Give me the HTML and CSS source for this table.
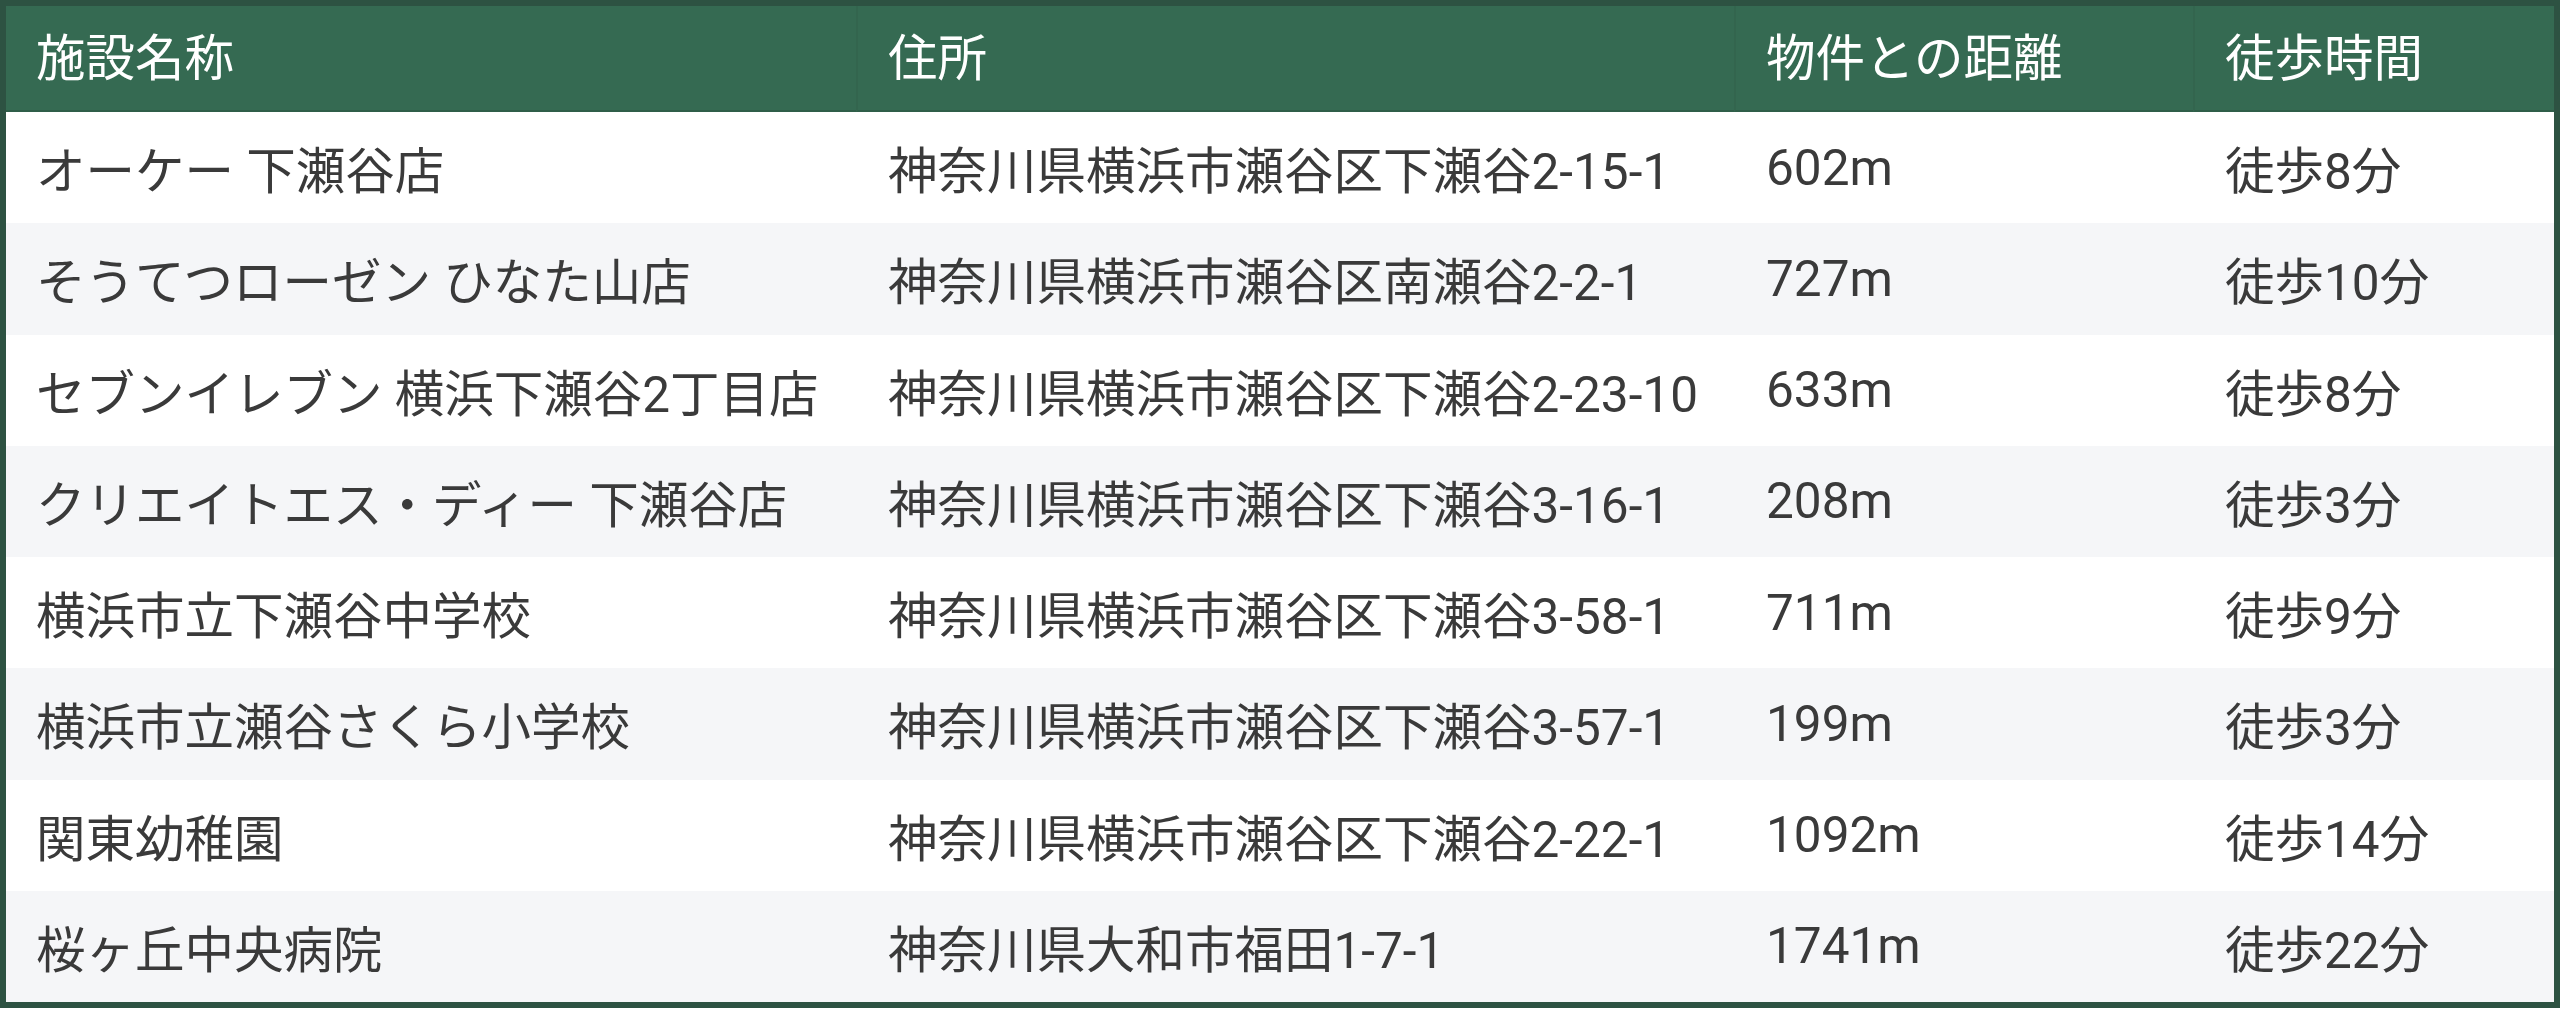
FILE: index.html
```html
<!DOCTYPE html>
<html lang="ja">
<head>
<meta charset="utf-8">
<title>周辺施設</title>
<link rel="stylesheet" href="styles.css">
</head>
<body>
<table class="facilities">
  <colgroup>
    <col class="c-name">
    <col class="c-addr">
    <col class="c-dist">
    <col class="c-walk">
  </colgroup>
  <thead>
    <tr>
      <th>施設名称</th>
      <th>住所</th>
      <th>物件との距離</th>
      <th>徒歩時間</th>
    </tr>
  </thead>
  <tbody>
    <tr><td>オーケー 下瀬谷店</td><td>神奈川県横浜市瀬谷区下瀬谷2-15-1</td><td>602m</td><td>徒歩8分</td></tr>
    <tr><td>そうてつローゼン ひなた山店</td><td>神奈川県横浜市瀬谷区南瀬谷2-2-1</td><td>727m</td><td>徒歩10分</td></tr>
    <tr><td>セブンイレブン 横浜下瀬谷2丁目店</td><td>神奈川県横浜市瀬谷区下瀬谷2-23-10</td><td>633m</td><td>徒歩8分</td></tr>
    <tr><td>クリエイトエス・ディー 下瀬谷店</td><td>神奈川県横浜市瀬谷区下瀬谷3-16-1</td><td>208m</td><td>徒歩3分</td></tr>
    <tr><td>横浜市立下瀬谷中学校</td><td>神奈川県横浜市瀬谷区下瀬谷3-58-1</td><td>711m</td><td>徒歩9分</td></tr>
    <tr><td>横浜市立瀬谷さくら小学校</td><td>神奈川県横浜市瀬谷区下瀬谷3-57-1</td><td>199m</td><td>徒歩3分</td></tr>
    <tr><td>関東幼稚園</td><td>神奈川県横浜市瀬谷区下瀬谷2-22-1</td><td>1092m</td><td>徒歩14分</td></tr>
    <tr><td>桜ヶ丘中央病院</td><td>神奈川県大和市福田1-7-1</td><td>1741m</td><td>徒歩22分</td></tr>
  </tbody>
</table>
</body>
</html>
```
FILE: styles.css
```css
html, body {
  margin: 0;
  padding: 0;
  background: #ffffff;
}

.facilities {
  width: 2560px;
  border-collapse: separate;
  border-spacing: 0;
  table-layout: fixed;
  border: 6px solid #2d5242;
  font-family: Roboto, "Noto Sans CJK JP", "Noto Sans", sans-serif;
  font-size: 49.5px;
  color: #3a3a3a;
}

.c-name { width: 850px; }
.c-addr { width: 878px; }
.c-dist { width: 459px; }
.c-walk { width: 361px; }

.facilities th {
  height: 106px;
  padding: 0 0 8px 30px;
  box-sizing: border-box;
  background: #356a52;
  color: #ffffff;
  font-weight: 400;
  text-align: left;
  vertical-align: middle;
  border-bottom: 2px solid #2f5e49;
  white-space: nowrap;
}

.facilities th + th {
  border-left: 2px solid #33654e;
  padding-left: 30px;
}

.facilities td {
  height: 111.25px;
  padding: 0 0 0 30px;
  box-sizing: border-box;
  vertical-align: middle;
  white-space: nowrap;
}

.facilities td + td {
  padding-left: 32px;
}

.facilities tbody tr:nth-child(even) td {
  background: #f5f6f8;
}
```
